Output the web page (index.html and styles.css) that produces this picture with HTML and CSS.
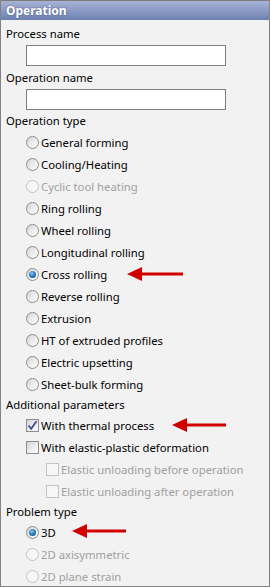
FILE: index.html
```html
<!DOCTYPE html>
<html lang="en">
<head>
  <meta charset="UTF-8" />
  <title>Operation</title>
  <link rel="stylesheet" href="styles.css">
</head>
<body>
  <div class="panel">
    <div class="panel-title">Operation</div>
    <div class="panel-body">

      <!-- names -->
      <div class="label first">Process name</div>
      <input type="text" class="field" />
      <div class="label">Operation name</div>
      <input type="text" class="field last" />

      <!-- operation type -->
      <div class="label op-type">Operation type</div>
      <div class="opt"><span class="radio"></span>General forming</div>
      <div class="opt"><span class="radio"></span>Cooling/Heating</div>
      <div class="opt disabled"><span class="radio"></span>Cyclic tool heating</div>
      <div class="opt"><span class="radio"></span>Ring rolling</div>
      <div class="opt"><span class="radio"></span>Wheel rolling</div>
      <div class="opt"><span class="radio"></span>Longitudinal rolling</div>
      <div class="opt">
        <span class="radio checked"></span>Cross rolling
        <svg class="arrow arrow-cross" width="56" height="14" viewBox="0 0 56 14"><polygon points="0,7 15,0 15,14" /><rect x="14" y="5.5" width="42" height="3" /></svg>
      </div>
      <div class="opt"><span class="radio"></span>Reverse rolling</div>
      <div class="opt"><span class="radio"></span>Extrusion</div>
      <div class="opt"><span class="radio"></span>HT of extruded profiles</div>
      <div class="opt"><span class="radio"></span>Electric upsetting</div>
      <div class="opt"><span class="radio"></span>Sheet-bulk forming</div>

      <!-- additional parameters -->
      <div class="label small">Additional parameters</div>
      <div class="opt">
        <span class="check checked">
          <svg width="11" height="11" viewBox="0 0 11 11"><path d="M1.5 5.5 L4.2 8.8 L9.5 1.2" /></svg>
        </span>With thermal process
        <svg class="arrow arrow-thermal" width="54" height="14" viewBox="0 0 54 14"><polygon points="0,7 15,0 15,14" /><rect x="14" y="5.5" width="40" height="3" /></svg>
      </div>
      <div class="opt"><span class="check"></span>With elastic-plastic deformation</div>
      <div class="opt sub disabled"><span class="check"></span>Elastic unloading before operation</div>
      <div class="opt sub disabled"><span class="check"></span>Elastic unloading after operation</div>

      <!-- problem type -->
      <div class="label small">Problem type</div>
      <div class="opt">
        <span class="radio checked"></span>3D
        <svg class="arrow arrow-3d" width="54" height="14" viewBox="0 0 54 14"><polygon points="0,7 15,0 15,14" /><rect x="14" y="5.5" width="40" height="3" /></svg>
      </div>
      <div class="opt disabled"><span class="radio"></span>2D axisymmetric</div>
      <div class="opt disabled"><span class="radio"></span>2D plane strain</div>
    </div>
  </div>
</body>
</html>
```

FILE: styles.css
```css
/* ------------------ Global ------------------ */
body {
  margin: 0;
  background: #f2f2f2;
  font-family: "Noto Sans", "DejaVu Sans", sans-serif;
  font-size: 11.3px;
  color: #000;
}
.panel {
  width: 270px;
  height: 587px;
  box-sizing: border-box;
  border: 1px solid #828282;
  border-top: none;
  background: #f2f2f2;
  overflow: hidden;
}
.panel-title {
  height: 20px;
  box-sizing: border-box;
  border-top: 1px solid #7c7c7c;
  padding-left: 5px;
  line-height: 19px;
  font-size: 12px;
  font-weight: bold;
  color: #fff;
  text-shadow: 0 0 2px rgba(40,50,90,0.6);
  background: linear-gradient(#a6b3d5, #8898c4 55%, #6c80ae);
}
.panel-body {
  padding: 3px 0 0 5px;
}

/* ------------------ Labels / fields ------------------ */
.label {
  height: 22px;
  line-height: 22px;
  white-space: nowrap;
}
.label.op-type {
  height: 21px;
  line-height: 21px;
}
.label.small {
  height: 19px;
  line-height: 19px;
}
.field {
  display: block;
  width: 200px;
  height: 21px;
  box-sizing: border-box;
  margin: 0 0 1px 20px;
  border: 1px solid #7f7f7f;
  background: #fff;
  padding: 0;
}
.field.last {
  margin-bottom: 0;
}

/* ------------------ Options ------------------ */
.opt {
  position: relative;
  display: flex;
  align-items: center;
  height: 22px;
  padding-left: 20px;
  white-space: nowrap;
}
.opt.sub {
  padding-left: 40px;
}
.opt.disabled {
  color: #a0a0a0;
}
.radio, .check {
  flex: none;
  width: 13px;
  height: 13px;
  box-sizing: border-box;
  margin-right: 2px;
  border: 1px solid #8d8d8d;
  background: linear-gradient(135deg, #d4d4d4, #f0f0f0 60%, #fbfbfb);
  display: flex;
  align-items: center;
  justify-content: center;
}
.radio {
  border-radius: 50%;
}
.radio.checked::after {
  content: "";
  width: 7px;
  height: 7px;
  border-radius: 50%;
  background: radial-gradient(circle at 40% 35%, #8cc5ee, #2a78bd 50%, #0f3f73);
}
.check.checked svg path {
  fill: none;
  stroke: #3b4e9c;
  stroke-width: 1.8;
}
.disabled .radio, .disabled .check {
  border-color: #c4c4c4;
  background: #f6f6f6;
}

/* ------------------ Arrows ------------------ */
.arrow {
  position: absolute;
  top: 4px;
  fill: #d10000;
}
.arrow-cross { left: 121px; }
.arrow-thermal { left: 166px; }
.arrow-3d { left: 66px; top: 3px; }
```
